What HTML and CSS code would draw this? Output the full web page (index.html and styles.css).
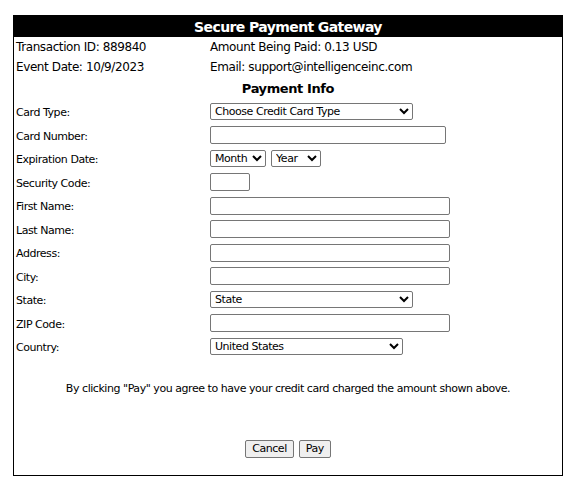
FILE: index.html
```html
<!DOCTYPE html>
<html lang="en">
<head>
    <meta charset="UTF-8">
    <title>Secure Payment Gateway</title>
    <link rel="stylesheet" href="styles.css">
</head>
<body>

<div class="gateway">
    <div class="gateway-title">Secure Payment Gateway</div>

    <div class="info-grid">
        <div>Transaction ID: 889840</div>
        <div>Amount Being Paid: 0.13 USD</div>
        <div>Event Date: 10/9/2023</div>
        <div>Email: support@intelligenceinc.com</div>
    </div>

    <div class="section-title">Payment Info</div>

    <form class="pay-form" onsubmit="return false;">
        <label>Card Type:</label>
        <div><select class="sel-card"><option>Choose Credit Card Type</option></select></div>

        <label>Card Number:</label>
        <div><input type="text" class="in-card"></div>

        <label>Expiration Date:</label>
        <div class="exp">
            <select class="sel-month"><option>Month</option></select>
            <select class="sel-year"><option>Year</option></select>
        </div>

        <label>Security Code:</label>
        <div><input type="text" class="in-cvv"></div>

        <label>First Name:</label>
        <div><input type="text" class="in-wide"></div>

        <label>Last Name:</label>
        <div><input type="text" class="in-wide"></div>

        <label>Address:</label>
        <div><input type="text" class="in-wide"></div>

        <label>City:</label>
        <div><input type="text" class="in-wide"></div>

        <label>State:</label>
        <div><select class="sel-state"><option>State</option></select></div>

        <label>ZIP Code:</label>
        <div><input type="text" class="in-wide"></div>

        <label>Country:</label>
        <div><select class="sel-country"><option>United States</option></select></div>
    </form>

    <p class="agree">By clicking "Pay" you agree to have your credit card charged the amount shown above.</p>

    <div class="actions">
        <button type="button">Cancel</button>
        <button type="button">Pay</button>
    </div>
</div>

</body>
</html>
```

FILE: styles.css
```css
body {
    margin: 15px 0 0 13px;
    font-family: "DejaVu Sans", Verdana, sans-serif;
    color: #000;
}

.gateway {
    width: 548px;
    border: 1px solid #000;
    border-top: none;
}

.gateway-title {
    background-color: #000;
    color: #fff;
    font-weight: bold;
    font-size: 14px;
    letter-spacing: -0.6px;
    height: 22px;
    line-height: 24px;
    text-align: center;
}

.info-grid {
    display: grid;
    grid-template-columns: 194px 1fr;
    grid-auto-rows: 20px;
    align-items: center;
    padding-left: 2px;
    font-size: 12px;
    letter-spacing: -0.4px;
}

.section-title {
    height: 23px;
    line-height: 24px;
    text-align: center;
    font-weight: bold;
    font-size: 13px;
    letter-spacing: -0.4px;
}

.pay-form {
    display: grid;
    grid-template-columns: 194px 1fr;
    grid-auto-rows: 23.5px;
    align-items: center;
    padding-left: 2px;
    margin: 0;
    font-size: 11px;
    letter-spacing: -0.45px;
}

.pay-form label {
    padding-top: 2px;
}

.pay-form > div {
    display: flex;
    align-items: center;
}

.pay-form input,
.pay-form select,
.actions button {
    font-family: "DejaVu Sans", Verdana, sans-serif;
    font-size: 11px;
    letter-spacing: -0.45px;
    box-sizing: border-box;
    margin: 0;
}

.pay-form input {
    height: 18px;
    border: 1px solid #767676;
    border-radius: 2px;
    padding: 0 3px;
}

.pay-form select {
    height: 17px;
    border: 1px solid #767676;
    border-radius: 2px;
    padding: 0;
    background-color: #fff;
    color: #000;
}

.exp {
    gap: 5px;
}

.sel-card,
.sel-state { width: 203px; }
.sel-country { width: 193px; }
.sel-month { width: 56px; }
.sel-year { width: 50px; }

.in-card { width: 236px; }
.in-cvv { width: 40px; }
.in-wide { width: 240px; }

.agree {
    margin: 23px 0 0;
    text-align: center;
    font-size: 11px;
    letter-spacing: -0.45px;
}

.actions {
    display: flex;
    justify-content: center;
    gap: 5px;
    padding: 45px 0 17px;
}

.actions button {
    height: 18px;
    padding: 0 6px;
    border: 1px solid #767676;
    border-radius: 2px;
    background-color: #efefef;
}
```
